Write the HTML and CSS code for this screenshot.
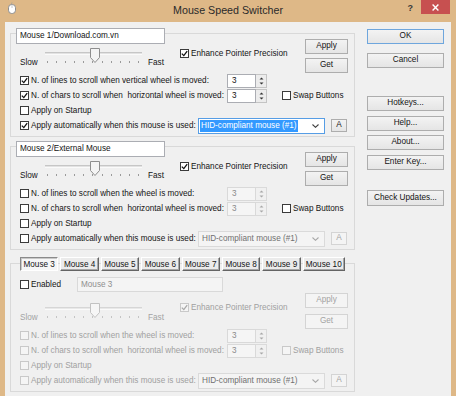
FILE: index.html
```html
<!DOCTYPE html>
<html lang="en">
<head>
<meta charset="utf-8">
<title>Mouse Speed Switcher</title>
<link rel="stylesheet" href="styles.css">
</head>
<body>
<div class="window">
  <div class="titlebar">
    <div class="tb-left">
      <svg class="appicon" viewBox="0 0 10 12" width="10" height="12" aria-hidden="true">
        <path d="M5 0.5 C5 1.6 4.2 1.6 4.2 2.8" fill="none" stroke="#9a9a9a" stroke-width="0.8"/>
        <rect x="1.5" y="2.5" width="7" height="9" rx="3.2" fill="#fff" stroke="#8d8d8d"/>
        <path d="M5 2.8 V6" stroke="#b5b5b5" stroke-width="0.7"/>
      </svg>
    </div>
    <div class="title">Mouse Speed Switcher</div>
    <div class="tb-right">
      <span class="help">?</span>
      <span class="close"><svg viewBox="0 0 7 7" width="7" height="7"><path d="M0.6 0.6 L6.4 6.4 M6.4 0.6 L0.6 6.4" stroke="#fff" stroke-width="1.4"/></svg></span>
    </div>
  </div>

  <div class="client">
    <div class="groups">

      <!-- Mouse 1 -->
      <section class="group g1">
        <div class="head">
          <div class="hleft">
            <div class="name">Mouse 1/Download.com.vn</div>
            <div class="slider">
              <span class="slbl">Slow</span>
              <div class="track">
                <div class="groove"></div>
                <div class="ticks"><i></i><i></i><i></i><i></i><i></i><i></i><i></i><i></i><i></i><i></i><i></i></div>
                <svg class="thumb" viewBox="0 0 10 15"><path d="M0.5 0.5H9.5V9.5L5 14.5L0.5 9.5Z"/></svg>
              </div>
              <span class="slbl fast">Fast</span>
            </div>
          </div>
          <label class="chk enh"><span class="box"><svg viewBox="0 0 7 7"><path d="M0.8 3.6L2.8 5.6L6.2 1.2"/></svg></span>Enhance Pointer Precision</label>
          <div class="ag"><button class="btn">Apply</button><button class="btn">Get</button></div>
        </div>
        <div class="row">
          <label class="chk lw"><span class="box"><svg viewBox="0 0 7 7"><path d="M0.8 3.6L2.8 5.6L6.2 1.2"/></svg></span>N. of lines to scroll when vertical wheel is moved:</label>
          <div class="spin"><span class="field">3</span><span class="arrows"><svg viewBox="0 0 9 12"><path d="M2.5 4.5L4.5 2.5L6.5 4.5Z M2.5 7.5L4.5 9.5L6.5 7.5Z"/></svg></span></div>
        </div>
        <div class="row">
          <label class="chk lw"><span class="box"><svg viewBox="0 0 7 7"><path d="M0.8 3.6L2.8 5.6L6.2 1.2"/></svg></span>N. of chars to scroll when&nbsp; horizontal wheel is moved:</label>
          <div class="spin"><span class="field">3</span><span class="arrows"><svg viewBox="0 0 9 12"><path d="M2.5 4.5L4.5 2.5L6.5 4.5Z M2.5 7.5L4.5 9.5L6.5 7.5Z"/></svg></span></div>
          <label class="chk swap"><span class="box"></span>Swap Buttons</label>
        </div>
        <div class="row">
          <label class="chk"><span class="box"></span>Apply on Startup</label>
        </div>
        <div class="row">
          <label class="chk aw"><span class="box"><svg viewBox="0 0 7 7"><path d="M0.8 3.6L2.8 5.6L6.2 1.2"/></svg></span>Apply automatically when this mouse is used:</label>
          <div class="combo focus"><span class="sel">HID-compliant mouse (#1)</span><svg class="chev" viewBox="0 0 7 4"><path d="M0.5 0.5L3.5 3.3L6.5 0.5"/></svg></div>
          <button class="btn abtn">A</button>
        </div>
      </section>

      <!-- Mouse 2 -->
      <section class="group g2">
        <div class="head">
          <div class="hleft">
            <div class="name">Mouse 2/External Mouse</div>
            <div class="slider">
              <span class="slbl">Slow</span>
              <div class="track">
                <div class="groove"></div>
                <div class="ticks"><i></i><i></i><i></i><i></i><i></i><i></i><i></i><i></i><i></i><i></i><i></i></div>
                <svg class="thumb" viewBox="0 0 10 15"><path d="M0.5 0.5H9.5V9.5L5 14.5L0.5 9.5Z"/></svg>
              </div>
              <span class="slbl fast">Fast</span>
            </div>
          </div>
          <label class="chk enh"><span class="box"><svg viewBox="0 0 7 7"><path d="M0.8 3.6L2.8 5.6L6.2 1.2"/></svg></span>Enhance Pointer Precision</label>
          <div class="ag"><button class="btn">Apply</button><button class="btn">Get</button></div>
        </div>
        <div class="row">
          <label class="chk lw"><span class="box"></span>N. of lines to scroll when the wheel is moved:</label>
          <div class="spin dis"><span class="field">3</span><span class="arrows"><svg viewBox="0 0 9 12"><path d="M2.5 4.5L4.5 2.5L6.5 4.5Z M2.5 7.5L4.5 9.5L6.5 7.5Z"/></svg></span></div>
        </div>
        <div class="row">
          <label class="chk lw"><span class="box"></span>N. of chars to scroll when&nbsp; horizontal wheel is moved:</label>
          <div class="spin dis"><span class="field">3</span><span class="arrows"><svg viewBox="0 0 9 12"><path d="M2.5 4.5L4.5 2.5L6.5 4.5Z M2.5 7.5L4.5 9.5L6.5 7.5Z"/></svg></span></div>
          <label class="chk swap"><span class="box"></span>Swap Buttons</label>
        </div>
        <div class="row">
          <label class="chk"><span class="box"></span>Apply on Startup</label>
        </div>
        <div class="row">
          <label class="chk aw"><span class="box"></span>Apply automatically when this mouse is used:</label>
          <div class="combo dis"><span class="val">HID-compliant mouse (#1)</span><svg class="chev" viewBox="0 0 7 4"><path d="M0.5 0.5L3.5 3.3L6.5 0.5"/></svg></div>
          <button class="btn abtn dis">A</button>
        </div>
      </section>

      <!-- Mouse 3..10 -->
      <section class="group g3 off">
        <div class="tabs">
          <span class="tab active">Mouse 3</span>
          <span class="tab">Mouse 4</span>
          <span class="tab">Mouse 5</span>
          <span class="tab">Mouse 6</span>
          <span class="tab">Mouse 7</span>
          <span class="tab">Mouse 8</span>
          <span class="tab">Mouse 9</span>
          <span class="tab wide">Mouse 10</span>
        </div>
        <div class="row enrow">
          <label class="chk enlbl"><span class="box"></span>Enabled</label>
          <div class="name dis">Mouse 3</div>
        </div>
        <div class="head h3">
          <div class="hleft">
            <div class="slider dis">
              <span class="slbl">Slow</span>
              <div class="track">
                <div class="groove"></div>
                <div class="ticks"><i></i><i></i><i></i><i></i><i></i><i></i><i></i><i></i><i></i><i></i><i></i></div>
                <svg class="thumb" viewBox="0 0 10 15"><path d="M0.5 0.5H9.5V9.5L5 14.5L0.5 9.5Z"/></svg>
              </div>
              <span class="slbl fast">Fast</span>
            </div>
          </div>
          <label class="chk enh dis"><span class="box"><svg viewBox="0 0 7 7"><path d="M0.8 3.6L2.8 5.6L6.2 1.2"/></svg></span>Enhance Pointer Precision</label>
          <div class="ag"><button class="btn dis">Apply</button><button class="btn dis">Get</button></div>
        </div>
        <div class="row">
          <label class="chk lw dis"><span class="box"></span>N. of lines to scroll when the wheel is moved:</label>
          <div class="spin dis"><span class="field">3</span><span class="arrows"><svg viewBox="0 0 9 12"><path d="M2.5 4.5L4.5 2.5L6.5 4.5Z M2.5 7.5L4.5 9.5L6.5 7.5Z"/></svg></span></div>
        </div>
        <div class="row">
          <label class="chk lw dis"><span class="box"></span>N. of chars to scroll when&nbsp; horizontal wheel is moved:</label>
          <div class="spin dis"><span class="field">3</span><span class="arrows"><svg viewBox="0 0 9 12"><path d="M2.5 4.5L4.5 2.5L6.5 4.5Z M2.5 7.5L4.5 9.5L6.5 7.5Z"/></svg></span></div>
          <label class="chk swap dis"><span class="box"></span>Swap Buttons</label>
        </div>
        <div class="row">
          <label class="chk dis"><span class="box"></span>Apply on Startup</label>
        </div>
        <div class="row">
          <label class="chk aw dis"><span class="box"></span>Apply automatically when this mouse is used:</label>
          <div class="combo dis"><span class="val">HID-compliant mouse (#1)</span><svg class="chev" viewBox="0 0 7 4"><path d="M0.5 0.5L3.5 3.3L6.5 0.5"/></svg></div>
          <button class="btn abtn dis">A</button>
        </div>
      </section>
    </div>

    <div class="side">
      <button class="btn default">OK</button>
      <button class="btn cancel">Cancel</button>
      <button class="btn hotkeys">Hotkeys...</button>
      <button class="btn help-btn">Help...</button>
      <button class="btn about">About...</button>
      <button class="btn enter">Enter Key...</button>
      <button class="btn updates">Check Updates...</button>
    </div>
  </div>
</div>
</body>
</html>
```

FILE: styles.css
```css
* { box-sizing: border-box; }
html, body { margin: 0; padding: 0; }
body {
  width: 456px;
  height: 396px;
  overflow: hidden;
  font-family: "Liberation Sans", Arial, sans-serif;
  font-size: 8.2px;
  color: #141414;
}

.window {
  width: 456px;
  height: 396px;
  background: #deb887;
  display: flex;
  flex-direction: column;
}

/* ---------- title bar ---------- */
.titlebar {
  height: 22px;
  flex: none;
  display: grid;
  grid-template-columns: 1fr auto 1fr;
  align-items: start;
}
.appicon { display: block; margin: 2px 0 0 7px; }
.title {
  font-size: 10.7px;
  line-height: 20px;
  color: #2a2a2a;
}
.tb-right {
  justify-self: end;
  display: flex;
  align-items: flex-start;
  margin-right: 6px;
}
.help {
  font-weight: bold;
  font-size: 9px;
  line-height: 16px;
  color: #3a3a3a;
  margin-right: 8px;
}
.close {
  width: 29px;
  height: 14px;
  background: #c75050;
  display: flex;
  align-items: center;
  justify-content: center;
}
.close svg { display: block; }

/* ---------- client ---------- */
.client {
  flex: 1;
  margin: 0 5px;
  background: #f0f0f0;
  display: flex;
}
.groups {
  width: 350px;
  padding: 11px 0 0 5px;
  flex: none;
}
.group {
  width: 345px;
  border: 1px solid #d9d9d9;
  padding-bottom: 3px;
}
.g2 { margin-top: 9px; }
.g3 { margin-top: 13px; }

.head {
  display: flex;
  height: 45px;
  margin-top: -6px;
}
.head.h3 { height: 36px; margin-top: 0; }

.hleft { width: 149px; margin-left: 5px; flex: none; }
.name {
  height: 16px;
  border: 1px solid #abadb3;
  background: #fff;
  padding-left: 3px;
  line-height: 14px;
  white-space: nowrap;
}
.name.dis {
  width: 146px;
  height: 15px;
  line-height: 13px;
  background: #f4f4f4;
  border-color: #d9d9d9;
  color: #8f8f8f;
  padding-left: 3px;
}

/* slider */
.slider {
  display: flex;
  height: 21px;
  margin-top: 3px;
  padding-left: 4px;
}
.h3 .slider { margin-top: 10px; }
.slbl { width: 25px; align-self: flex-end; line-height: 11px; }
.slbl.fast { width: auto; margin-left: 6px; }
.track { position: relative; width: 97px; flex: none; }
.groove {
  margin-top: 5px;
  height: 3px;
  border-top: 1px solid #c6c6c6;
  border-bottom: 1px solid #fafafa;
  background: #e2e2e2;
}
.ticks {
  display: flex;
  justify-content: space-between;
  margin: 6px 3px 0 2px;
  height: 2px;
}
.ticks i { display: block; width: 1px; height: 2px; background: #9a9a9a; }
.thumb {
  position: absolute;
  left: 45px;
  top: 1px;
  width: 10px;
  height: 15px;
}
.thumb path { fill: #f4f4f4; stroke: #8e8e8e; stroke-width: 1; }
.slider.dis .slbl { color: #a3a3a3; }
.slider.dis .ticks i { background: #c4c4c4; }
.slider.dis .thumb path { fill: #f6f6f6; stroke: #c2c2c2; }
.slider.dis .groove { border-top-color: #d6d6d6; background: #e8e8e8; }

/* checkboxes */
.chk {
  display: flex;
  align-items: center;
  white-space: nowrap;
  height: 15px;
}
.box {
  width: 9px;
  height: 9px;
  border: 1px solid #3a3a3a;
  background: #fff;
  margin-right: 2px;
  flex: none;
  display: flex;
  align-items: center;
  justify-content: center;
}
.box svg { width: 7px; height: 7px; display: block; }
.box path { fill: none; stroke: #111; stroke-width: 1.3; }
.chk.dis { color: #a0a0a0; }
.chk.dis .box { border-color: #c9c9c9; background: #f5f5f5; }
.chk.dis .box path { stroke: #a8a8a8; }

.enh { margin-left: 15px; margin-top: 20px; height: 11px; align-self: flex-start; }
.h3 .enh { margin-top: 10px; }

.ag {
  margin-left: auto;
  margin-right: 6px;
  margin-top: 11px;
  display: flex;
  flex-direction: column;
  gap: 4px;
  width: 43px;
  align-self: flex-start;
}
.h3 .ag { margin-top: 1px; gap: 6px; }

/* rows */
.row {
  display: flex;
  align-items: center;
  height: 15px;
  padding-left: 9px;
}
.lw { width: 207px; }
.aw { width: 178px; }
.swap { margin-left: 15px; }

.spin { display: flex; height: 14px; }
.field {
  width: 29px;
  border: 1px solid #abadb3;
  background: #fff;
  padding-left: 4px;
  line-height: 12px;
}
.arrows {
  width: 11px;
  border: 1px solid #c4c4c4;
  border-left: 0;
  background: #ececec;
  display: flex;
  align-items: center;
  justify-content: center;
}
.arrows svg { width: 9px; height: 12px; display: block; }
.arrows path { fill: #333; }
.spin.dis .field { background: #f5f5f5; border-color: #d9d9d9; color: #8a8a8a; }
.spin.dis .arrows { border-color: #dadada; background: #f0f0f0; }
.spin.dis .arrows path { fill: #a8a8a8; }

.combo {
  width: 127px;
  height: 16px;
  border: 1px solid #abadb3;
  background: #fff;
  display: flex;
  align-items: center;
  padding-left: 1px;
  white-space: nowrap;
}
.combo.focus { border-color: #569de5; }
.sel {
  background: #3399ff;
  color: #fff;
  padding: 0 1px;
  line-height: 12px;
}
.val { padding-left: 2px; color: #707070; }
.chev { margin-left: auto; margin-right: 5px; width: 7px; height: 4px; display: block; }
.chev path { fill: none; stroke: #404040; stroke-width: 1.1; }
.combo.dis { background: #f4f4f4; border-color: #dadada; }
.combo.dis .chev path { stroke: #a8a8a8; }

/* buttons */
.btn {
  font: inherit;
  color: #141414;
  background: linear-gradient(#f3f3f3, #e5e5e5);
  border: 1px solid #adadad;
  padding: 0;
  margin: 0;
  height: 15px;
  display: flex;
  align-items: center;
  justify-content: center;
  line-height: 1;
}
.btn.dis { color: #a3a3a3; border-color: #d4d4d4; background: #f4f4f4; }
.abtn { width: 16px; height: 13px; margin-left: 6px; }

/* tabs */
.tabs {
  display: flex;
  gap: 2px;
  margin: -7px 0 0 9px;
  height: 14px;
}
.tab {
  width: 38.4px;
  height: 14px;
  flex: none;
  display: flex;
  align-items: center;
  justify-content: center;
  background: #ebebeb;
  border-top: 1px solid #fff;
  border-left: 1px solid #fff;
  border-right: 1px solid #646464;
  border-bottom: 1px solid #646464;
  box-shadow: inset -1px -1px #a6a6a6;
  white-space: nowrap;
}
.tab.wide { width: 42px; }
.tab.active {
  background: #f6f6f6;
  border-top-color: #8a8a8a;
  border-left-color: #8a8a8a;
  border-right-color: #fff;
  border-bottom-color: #fff;
  box-shadow: inset 1px 1px #c8c8c8;
}
.enrow { margin-top: 6px; }
.enlbl { width: 57px; }

/* side buttons */
.side {
  width: 77px;
  margin-left: 12px;
  padding-top: 7px;
  display: flex;
  flex-direction: column;
}
.btn.default { border-color: #6ea6dd; }
.cancel { margin-top: 9px; }
.hotkeys { margin-top: 28px; }
.help-btn { margin-top: 5px; }
.about { margin-top: 4px; }
.enter { margin-top: 5px; }
.updates { margin-top: 20px; height: 16px; }
```
